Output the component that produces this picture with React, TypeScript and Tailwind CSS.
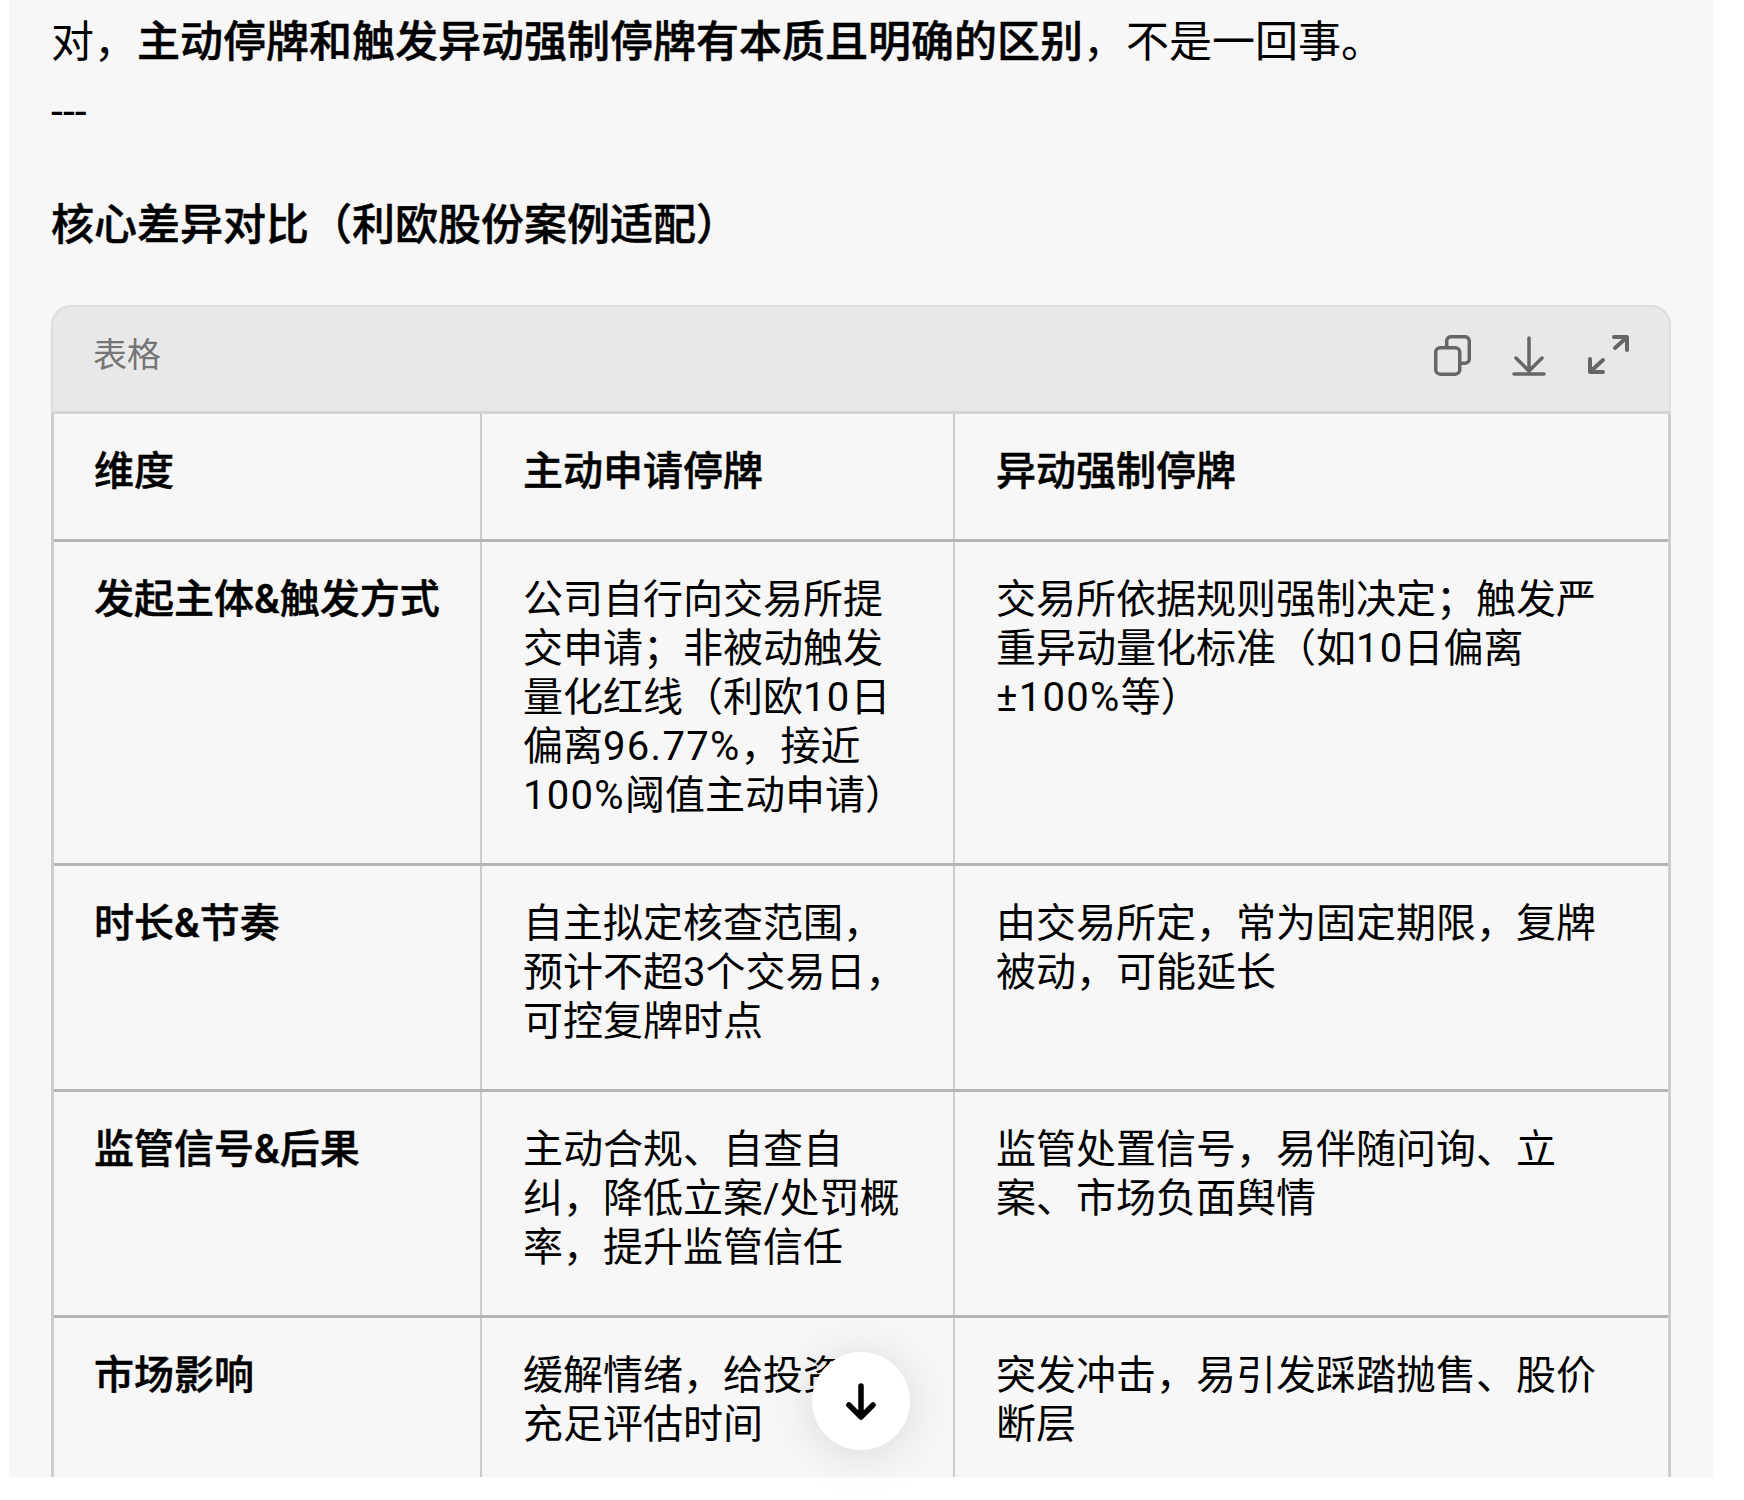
import type { ReactNode } from "react";

// latin runs sit a bit wider than plain Roboto in the reference
function Num({ children }: { children: ReactNode }) {
  return <span className="tracking-[1.3px]">{children}</span>;
}

const rows: { head: string; a: ReactNode; b: ReactNode }[] = [
  {
    head: "发起主体&触发方式",
    a: (
      <>
        公司自行向交易所提交申请；非被动触发量化红线（利欧<Num>10</Num>日偏离<Num>96.77%</Num>，接近<Num>100%</Num>阈值主动申请）
      </>
    ),
    b: (
      <>
        交易所依据规则强制决定；触发严重异动量化标准（如<Num>10</Num>日偏离<Num>±100%</Num>等）
      </>
    ),
  },
  {
    head: "时长&节奏",
    a: "自主拟定核查范围，预计不超3个交易日，可控复牌时点",
    b: "由交易所定，常为固定期限，复牌被动，可能延长",
  },
  {
    head: "监管信号&后果",
    a: "主动合规、自查自纠，降低立案/处罚概率，提升监管信任",
    b: "监管处置信号，易伴随问询、立案、市场负面舆情",
  },
  {
    head: "市场影响",
    a: "缓解情绪，给投资者充足评估时间",
    b: "突发冲击，易引发踩踏抛售、股价断层",
  },
];

function CopyIcon() {
  return (
    <svg width="37" height="41" viewBox="0 0 37 41" fill="none" stroke="#666666" strokeWidth="3.5" strokeLinejoin="round">
      <rect x="1.75" y="12.7" width="24" height="26.5" rx="4.5" />
      <path d="M12.7 12.5V6.2a4.5 4.5 0 0 1 4.5-4.5h13.6a4.5 4.5 0 0 1 4.5 4.5v17.6a4.5 4.5 0 0 1-4.5 4.5H26" />
    </svg>
  );
}

function DownloadIcon() {
  return (
    <svg width="34" height="42" viewBox="0 0 34 42" fill="none" stroke="#666666" strokeWidth="3.5" strokeLinecap="round" strokeLinejoin="round">
      <path d="M17 4v33M4 24l13 13 13-13M2 40h30" />
    </svg>
  );
}

function ExpandIcon() {
  return (
    <svg width="42" height="42" viewBox="0 0 42 42" fill="none" stroke="#666666" strokeWidth="4" strokeLinecap="round" strokeLinejoin="round">
      <path d="M27 3h13v13M39 4L28 14M3 25v13h13M4 37l12-11" />
    </svg>
  );
}

export default function App() {
  return (
    <div className="relative h-[1500px] w-[1744px] overflow-hidden bg-white font-['Roboto','Noto_Sans_CJK_SC',sans-serif] text-black">
      <div className="ml-[9px] h-[1477px] w-[1704px] overflow-hidden bg-[#f7f7f7] pl-[42px] pr-[42px]">
        <p className="pt-[13px] text-[43px] leading-[58px]">
          对，<strong className="font-medium [-webkit-text-stroke:0.5px_#000]">主动停牌和触发异动强制停牌有本质且明确的区别</strong>，不是一回事。
        </p>
        <p className="mt-[11px] text-[43px] leading-[58px]">---</p>
        <h3 className="mt-[56px] text-[43px] font-medium leading-[58px] [-webkit-text-stroke:0.5px_#000]">核心差异对比（利欧股份案例适配）</h3>

        <div className="mt-[51px]">
          <div className="flex h-[109px] items-center justify-between rounded-t-[20px] border-x-[2px] border-b-[3px] border-t-[2px] border-x-[#dcdcdc] border-b-[#d4d4d4] border-t-[#dcdcdc] bg-[#e8e8e8] pb-[8px] pl-[40px] pr-[40px]">
            <span className="text-[34px] text-[#757575]">表格</span>
            <div className="flex items-center gap-[41px]">
              <CopyIcon />
              <DownloadIcon />
              <ExpandIcon />
            </div>
          </div>
          <div className="border-x-[3px] border-[#cecece]">
            <div className="grid grid-cols-[428px_473px_1fr] border-b-[3px] border-[#b5b5b5] text-[40px] font-medium leading-[49px] [-webkit-text-stroke:0.5px_#000]">
              <div className="border-r-[2px] border-[#cccccc] pb-[43px] pl-[40px] pt-[33px]">维度</div>
              <div className="border-r-[2px] border-[#cccccc] pb-[43px] pl-[41px] pt-[33px]">主动申请停牌</div>
              <div className="pb-[43px] pl-[41px] pt-[33px]">异动强制停牌</div>
            </div>
            {rows.map((row, i) => (
              <div
                key={row.head}
                className={`grid grid-cols-[428px_473px_1fr] text-[40px] leading-[49px] ${i < rows.length - 1 ? "border-b-[3px] border-[#b5b5b5]" : ""}`}
              >
                <div className="border-r-[2px] border-[#cccccc] pb-[43px] pl-[40px] pr-[30px] pt-[33px] font-medium [-webkit-text-stroke:0.5px_#000]">{row.head}</div>
                <div className="border-r-[2px] border-[#cccccc] pb-[43px] pl-[41px] pr-[40px] pt-[33px]">{row.a}</div>
                <div className="pb-[43px] pl-[41px] pr-[70px] pt-[33px]">{row.b}</div>
              </div>
            ))}
          </div>
        </div>
      </div>

      <div className="absolute left-[812px] top-[1352px] flex h-[98px] w-[98px] items-center justify-center rounded-full bg-white shadow-[0_4px_48px_rgba(0,0,0,0.13)]">
        <svg width="44" height="44" viewBox="0 0 44 44" fill="none" stroke="#000000" strokeWidth="5.5" strokeLinecap="round" strokeLinejoin="round">
          <path d="M22 7V38M10 26l12 12 12-12" />
        </svg>
      </div>
    </div>
  );
}
